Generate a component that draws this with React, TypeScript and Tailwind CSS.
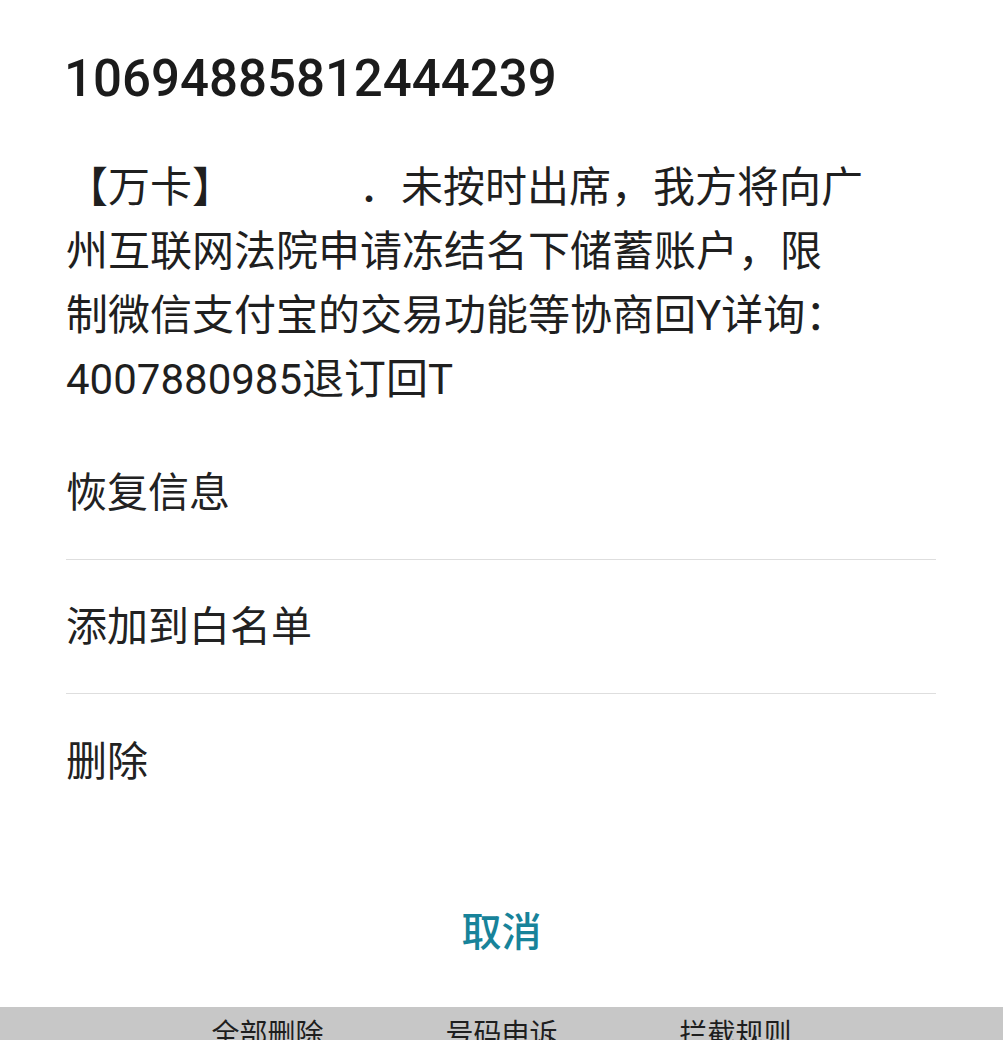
import React from "react";

const FONT = "font-['Roboto','Noto_Sans_CJK_SC',sans-serif]";

export default function App() {
  return (
    <div className={`w-full h-[1040px] bg-white flex flex-col overflow-hidden ${FONT}`}>
      <div className="pl-[64px] pt-[49px] text-[51px] leading-[60px] font-medium text-[#1b1b1b] tracking-[0px]">
        10694885812444239
      </div>

      <div className="pl-[66px] mt-[47px] text-[42px] leading-[64px] text-[#1f1f1f] whitespace-nowrap">
        <div>
          【万卡】<span className="inline-block w-[125px]"></span>．未按时出席，我方将向广
        </div>
        <div>州互联网法院申请冻结名下储蓄账户，限</div>
        <div>制微信支付宝的交易功能等协商回Y详询：</div>
        <div>4007880985退订回T</div>
      </div>

      <div className="ml-[66px] w-[870px] mt-[15px] text-[41px] leading-[50px] text-[#222222]">
        <div className="h-[133px] flex items-center border-b border-[#dedede]">恢复信息</div>
        <div className="h-[134px] flex items-center border-b border-[#dedede]">添加到白名单</div>
        <div className="h-[136px] flex items-center">删除</div>
      </div>

      <div className="pt-[79px] text-center text-[40px] leading-[48px] font-medium text-[#17839a]">
        取消
      </div>

      <div className="mt-auto h-[33px] bg-[#c7c7c7] overflow-hidden">
        <div className="flex justify-center gap-[122px] pt-[8px] text-[28px] leading-[40px] text-[#1e1e1e]">
          <span>全部删除</span>
          <span>号码申诉</span>
          <span>拦截规则</span>
        </div>
      </div>
    </div>
  );
}
